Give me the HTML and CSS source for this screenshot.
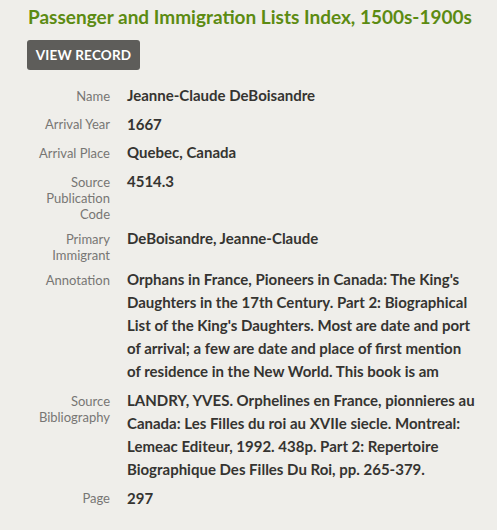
FILE: index.html
```html
<!DOCTYPE html>
<html>
<head>
<meta charset="utf-8">
<link rel="stylesheet" href="styles.css">
</head>
<body>
<div class="record">
  <h1 class="title">Passenger and Immigration Lists Index, 1500s-1900s</h1>
  <button class="btn">VIEW RECORD</button>
  <dl class="facts">
    <div class="row"><dt>Name</dt><dd>Jeanne-Claude DeBoisandre</dd></div>
    <div class="row"><dt>Arrival Year</dt><dd>1667</dd></div>
    <div class="row"><dt>Arrival Place</dt><dd>Quebec, Canada</dd></div>
    <div class="row"><dt>Source Publication Code</dt><dd>4514.3</dd></div>
    <div class="row"><dt>Primary Immigrant</dt><dd>DeBoisandre, Jeanne-Claude</dd></div>
    <div class="row"><dt>Annotation</dt><dd>Orphans in France, Pioneers in Canada: The King's Daughters in the 17th Century. Part 2: Biographical List of the King's Daughters. Most are date and port of arrival; a few are date and place of first mention of residence in the New World. This book is am</dd></div>
    <div class="row"><dt>Source Bibliography</dt><dd>LANDRY, YVES. Orphelines en France, pionnieres au Canada: Les Filles du roi au XVIIe siecle. Montreal: Lemeac Editeur, 1992. 438p. Part 2: Repertoire Biographique Des Filles Du Roi, pp. 265-379.</dd></div>
    <div class="row"><dt>Page</dt><dd>297</dd></div>
  </dl>
</div>
</body>
</html>
```
FILE: styles.css
```css
html, body {
  margin: 0;
  padding: 0;
  background: #efeeea;
}
body {
  font-family: Lato, "Open Sans", sans-serif;
}
.record {
  padding: 4px 20px 0 28px;
}
.title {
  margin: 0 -20px 0 0;
  font-size: 19px;
  line-height: 26px;
  font-weight: 700;
  white-space: nowrap;
  color: #5c8b12;
}
.btn {
  display: block;
  margin: 10px 0 0 -1px;
  width: 113px;
  height: 30px;
  border: none;
  border-radius: 3px;
  background: #5e5d5a;
  color: #fff;
  font-family: inherit;
  font-size: 13.5px;
  font-weight: 700;
  letter-spacing: 0.2px;
  padding: 0;
}
.facts {
  margin: 14px 0 0 0;
  display: flex;
  flex-direction: column;
  gap: 5.7px;
}
.row {
  display: flex;
  gap: 17px;
}
.row dt {
  flex: 0 0 82px;
  text-align: right;
  font-size: 13px;
  line-height: 16px;
  padding-top: 3.5px;
  color: #777674;
}
.row dd {
  margin: 0;
  flex: 1;
  font-size: 15px;
  line-height: 23px;
  font-weight: 700;
  color: #353431;
}
```
